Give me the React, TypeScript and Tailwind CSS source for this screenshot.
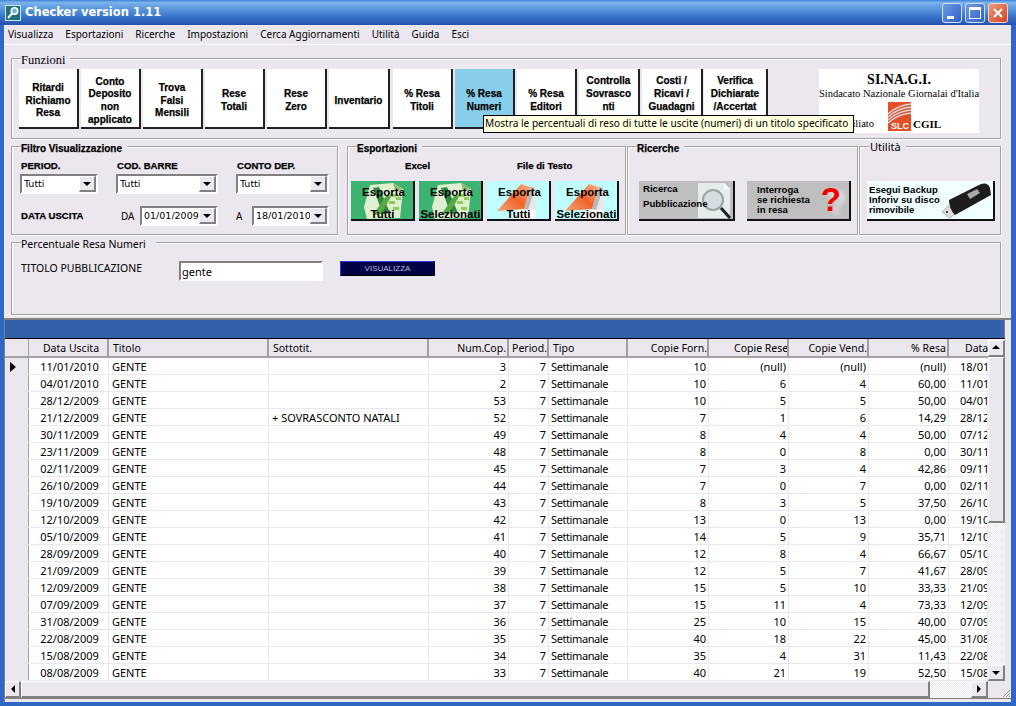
import type { ReactNode } from 'react';

const dejavu = "font-['DejaVu_Sans',sans-serif]";
const noto = "font-['Noto_Sans',sans-serif]";
const serif = "font-['Liberation_Serif',serif]";
const arial = "font-['Liberation_Sans',sans-serif]";

const menu = ['Visualizza', 'Esportazioni', 'Ricerche', 'Impostazioni', 'Cerca Aggiornamenti', 'Utilità', 'Guida', 'Esci'];

const functions = [
  { lines: ['Ritardi', 'Richiamo', 'Resa'], cls: 'w-[60px] bg-white' },
  { lines: ['Conto', 'Deposito', 'non', 'applicato'], cls: 'w-[60px] ml-[2px] bg-white' },
  { lines: ['Trova', 'Falsi', 'Mensili'], cls: 'w-[60px] ml-[2px] bg-white' },
  { lines: ['Rese', 'Totali'], cls: 'w-[60px] ml-[2px] bg-white' },
  { lines: ['Rese', 'Zero'], cls: 'w-[60px] ml-[2px] bg-white' },
  { lines: ['Inventario'], cls: 'w-[61px] ml-[2px] bg-white' },
  { lines: ['% Resa', 'Titoli'], cls: 'w-[60px] ml-[3px] bg-white' },
  { lines: ['% Resa', 'Numeri'], cls: 'w-[60px] ml-[2px] bg-[#87ceeb]' },
  { lines: ['% Resa', 'Editori'], cls: 'w-[60px] ml-[2px] bg-white' },
  // these three wrap to a fourth, empty line in the original
  { lines: ['Controlla', 'Sovrasco', 'nti'], cls: 'w-[61px] ml-[2px] bg-white pb-[13px]' },
  { lines: ['Costi /', 'Ricavi /', 'Guadagni'], cls: 'w-[61px] ml-[2px] bg-white pb-[13px]' },
  { lines: ['Verifica', 'Dichiarate', '/Accertat'], cls: 'w-[64px] ml-[1px] bg-white pb-[13px]' },
];

// date, sottotitolo, num, forn, rese, vend, %, data
const rows: string[][] = [
  ['11/01/2010', '', '3', '10', '(null)', '(null)', '(null)', '18/01'],
  ['04/01/2010', '', '2', '10', '6', '4', '60,00', '11/01'],
  ['28/12/2009', '', '53', '10', '5', '5', '50,00', '04/01'],
  ['21/12/2009', '+ SOVRASCONTO NATALI', '52', '7', '1', '6', '14,29', '28/12'],
  ['30/11/2009', '', '49', '8', '4', '4', '50,00', '07/12'],
  ['23/11/2009', '', '48', '8', '0', '8', '0,00', '30/11'],
  ['02/11/2009', '', '45', '7', '3', '4', '42,86', '09/11'],
  ['26/10/2009', '', '44', '7', '0', '7', '0,00', '02/11'],
  ['19/10/2009', '', '43', '8', '3', '5', '37,50', '26/10'],
  ['12/10/2009', '', '42', '13', '0', '13', '0,00', '19/10'],
  ['05/10/2009', '', '41', '14', '5', '9', '35,71', '12/10'],
  ['28/09/2009', '', '40', '12', '8', '4', '66,67', '05/10'],
  ['21/09/2009', '', '39', '12', '5', '7', '41,67', '28/09'],
  ['12/09/2009', '', '38', '15', '5', '10', '33,33', '21/09'],
  ['07/09/2009', '', '37', '15', '11', '4', '73,33', '12/09'],
  ['31/08/2009', '', '36', '25', '10', '15', '40,00', '07/09'],
  ['22/08/2009', '', '35', '40', '18', '22', '45,00', '31/08'],
  ['15/08/2009', '', '34', '35', '4', '31', '11,43', '22/08'],
  ['08/08/2009', '', '33', '40', '21', '19', '52,50', '15/08'],
];

const gridCols = 'grid grid-cols-[24px_80px_160px_160px_80px_40px_79px_81px_80px_80px_80px_39px]';
const raised = 'bg-[#ece7ef] border-t border-l border-t-white border-l-white border-r-2 border-b-2 border-r-[#808080] border-b-[#808080]';
const checker = 'bg-[repeating-conic-gradient(#ffffff_0_25%,#ece7ef_0_50%)] bg-[length:2px_2px]';
const heavy = '[-webkit-text-stroke:0.25px_#000]';
const labelCls = `text-[9.6px] leading-[12px] font-bold ${heavy} ${arial}`;
const legendBold = `top-[-5px] text-[10px] leading-[14px] font-bold ${heavy} ${arial}`;
const headSep = 'border-r-2 border-[#a0a0a0]';

function Group({ title, titleCls, cls, children }: { title: string; titleCls: string; cls: string; children?: ReactNode }) {
  return (
    <div className={`relative border border-[#a3a3a3] shadow-[inset_1px_1px_0_#fff,1px_1px_0_#fff] ${cls}`}>
      <span className={`absolute left-[9px] bg-[#ece7ef] pr-[5px] whitespace-nowrap ${titleCls}`}>{title}</span>
      {children}
    </div>
  );
}

function Arrow({ dir }: { dir: 'up' | 'down' | 'left' | 'right' }) {
  const pts = { up: '1,6 9,6 5,2', down: '1,3 9,3 5,7', left: '7,1 7,9 3,5', right: '3,1 3,9 7,5' }[dir];
  return (
    <svg viewBox="0 0 10 10" className="w-[10px] h-[10px]">
      <polygon points={pts} fill="#000" />
    </svg>
  );
}

function Combo({ value, cls }: { value: string; cls: string }) {
  return (
    <div className={`flex h-[20px] border-2 border-t-[#808080] border-l-[#808080] border-r-white border-b-white bg-white ${cls}`}>
      <span className={`flex-1 pl-[2px] text-[9.5px] leading-[16px] whitespace-nowrap overflow-hidden text-black ${dejavu}`}>{value}</span>
      <div className={`w-[17px] flex items-center justify-center ${raised}`}>
        <Arrow dir="down" />
      </div>
    </div>
  );
}

function ExcelIcon() {
  return (
    <svg viewBox="0 0 42 38" className="absolute left-[12px] top-[1px] w-[42px] h-[38px]">
      <polygon points="7,3 30,1 40,7 37,36 4,37 1,25" fill="#dff0d0" />
      <polygon points="30,1 40,7 32,9" fill="#8fbf6f" />
      <polygon points="10,6 16,5 27,31 20,32" fill="#2e8b3e" />
      <polygon points="23,14 29,13 18,32 10,33" fill="#58a848" />
      <rect x="27" y="12" width="6" height="3" fill="#8ccf50" />
      <rect x="33" y="15" width="5" height="3" fill="#8ccf50" />
      <rect x="26" y="19" width="6" height="3" fill="#8ccf50" />
      <rect x="30" y="25" width="6" height="3" fill="#8ccf50" />
    </svg>
  );
}

function NotesIcon({ id }: { id: string }) {
  return (
    <svg viewBox="0 0 42 38" className="absolute left-[10px] top-[1px] w-[42px] h-[38px]">
      <defs>
        <linearGradient id={id} x1="1" y1="0" x2="0" y2="1">
          <stop offset="0" stopColor="#f8b58c" />
          <stop offset="0.5" stopColor="#f0642a" />
          <stop offset="1" stopColor="#f5a578" />
        </linearGradient>
      </defs>
      <polygon points="30,3 39,6 39,37 16,37 22,27" fill="#e8e8e8" />
      <polygon points="22,27 39,28 39,37 16,37" fill="#fdfdfd" />
      <polygon points="24,2 34,5 27,27 0,29" fill={`url(#${id})`} />
      <polygon points="34,5 38,6 31,28 27,27" fill="#b9b9b9" />
    </svg>
  );
}

function FunctionButton({ lines, cls }: { lines: string[]; cls: string }) {
  return (
    <div className={`h-[60px] flex flex-col items-center justify-center pt-[6px] border-r-2 border-b-2 border-[#222] text-[10px] leading-[12.7px] font-bold text-black ${heavy} ${arial} ${cls}`}>
      {lines.map((l) => (
        <span key={l} className="whitespace-nowrap">{l}</span>
      ))}
    </div>
  );
}

function ExportButton({ bottom, cls, icon }: { bottom: string; cls: string; icon: ReactNode }) {
  return (
    <div className={`relative w-[64px] h-[40px] border-r-2 border-b-2 border-[#111] overflow-hidden ${cls}`}>
      {icon}
      <div className={`relative flex flex-col items-center pt-[5px] text-[11.5px] font-bold text-black leading-[13px] ${arial}`}>
        <span className="pl-[3px]">Esporta</span>
        <span className="mt-[9px] whitespace-nowrap pl-[1px]">{bottom}</span>
      </div>
    </div>
  );
}

export default function App() {
  return (
    <div className="relative w-[1016px] h-[706px] overflow-hidden flex flex-col bg-[#2f68c4]">
      {/* Title bar */}
      <div className="h-[25px] flex items-center pl-[5px] pr-[8px] bg-[linear-gradient(180deg,#3f80dc_0%,#7ab2ea_10%,#5b97de_35%,#3a76cc_65%,#2552ac_100%)]">
        <svg viewBox="0 0 16 16" className="w-[16px] h-[16px]">
          <rect x="0.5" y="0.5" width="15" height="15" fill="#1f6f7f" stroke="#cfe6ee" />
          <circle cx="9.5" cy="6" r="3.2" fill="#6fb5c8" stroke="#fff" strokeWidth="1.6" />
          <line x1="7" y1="8.5" x2="3" y2="13" stroke="#fff" strokeWidth="2" />
        </svg>
        <span className={`ml-[4px] pt-[1px] text-[11.5px] font-bold text-white ${dejavu}`}>Checker version 1.11</span>
        <div className="ml-auto flex gap-[3px]">
          <div className="w-[20px] h-[20px] rounded-[3px] border border-[#cfe0f5] bg-[linear-gradient(135deg,#6f9be6,#2f5fc8)] flex items-end pb-[3px] pl-[4px]">
            <div className="w-[7px] h-[3px] bg-white" />
          </div>
          <div className="w-[20px] h-[20px] rounded-[3px] border border-[#cfe0f5] bg-[linear-gradient(135deg,#6f9be6,#2f5fc8)] flex items-center justify-center">
            <div className="w-[12px] h-[12px] border border-white border-t-[3px]" />
          </div>
          <div className="w-[20px] h-[20px] rounded-[3px] border border-[#f0d8d0] bg-[linear-gradient(135deg,#ee9a80,#d0441f)] flex items-center justify-center">
            <svg viewBox="0 0 12 12" className="w-[12px] h-[12px]">
              <path d="M2 2 L10 10 M10 2 L2 10" stroke="#fff" strokeWidth="2" />
            </svg>
          </div>
        </div>
      </div>

      <div className="flex-1 min-h-0 px-[4px] pr-[5px] pb-[4px] flex">
        <div className="w-[1007px] bg-[#ece7ef] flex flex-col">
          {/* Menu */}
          <div className={`h-[20px] flex items-center pl-[4px] gap-[12px] border-b border-white text-[10px] text-black ${noto}`}>
            {menu.map((m) => (
              <span key={m}>{m}</span>
            ))}
          </div>

          <div className="pl-[7px] pr-[10px] flex flex-col">
            {/* Funzioni */}
            <Group title="Funzioni" titleCls={`top-[-6px] text-[12.5px] leading-[14px] ${serif}`} cls="mt-[13px] h-[81px] flex pl-[7px] pt-[10px] pr-[21px]">
              {functions.map((f) => (
                <FunctionButton key={f.lines.join()} lines={f.lines} cls={f.cls} />
              ))}
              <div className={`ml-auto w-[160px] h-[64px] bg-white flex flex-col items-center text-black ${serif}`}>
                <span className="text-[14px] leading-[15px] font-bold mt-[3px]">SI.NA.G.I.</span>
                <span className="text-[10.5px] leading-[14px] whitespace-nowrap">Sindacato Nazionale Giornalai d'Italia</span>
                <div className="flex items-end w-full pl-[19px] mt-[1px]">
                  <span className="text-[10.5px] leading-[12px] w-[50px] mb-[1px]">Affiliato</span>
                  <svg viewBox="0 0 23 29" className="w-[23px] h-[29px]">
                    <rect width="23" height="29" fill="#e2502a" />
                    <path d="M0 12 Q10 3 23 2 M0 15 Q10 6 23 5 M0 18 Q10 9 23 8 M0 21 Q10 12 23 11" stroke="#d9d9d9" strokeWidth="1.6" fill="none" />
                    <text x="12" y="27" textAnchor="middle" fontSize="9" fontWeight="bold" fontFamily="Liberation Sans" fill="#fff">SLC</text>
                  </svg>
                  <span className="text-[11px] leading-[12px] font-bold ml-[2px] mb-[1px]">CGIL</span>
                </div>
              </div>
            </Group>

            {/* Filter / export row */}
            <div className="flex mt-[7px]">
              <Group title="Filtro Visualizzazione" titleCls={legendBold} cls="w-[327px] h-[89px] pl-[8px] pt-[13px]">
                <div className="grid grid-cols-[96px_120px_93px]">
                  <span className={`pl-[1px] ${labelCls}`}>PERIOD.</span>
                  <span className={`pl-[1px] ${labelCls}`}>COD. BARRE</span>
                  <span className={`pl-[1px] ${labelCls}`}>CONTO DEP.</span>
                  <Combo value="Tutti" cls="w-[78px] mt-[2px]" />
                  <Combo value="Tutti" cls="w-[102px] mt-[2px]" />
                  <Combo value="Tutti" cls="w-[93px] mt-[2px]" />
                </div>
                <div className="flex items-center mt-[12px]">
                  <span className={`pl-[1px] w-[101px] ${labelCls}`}>DATA USCITA</span>
                  <span className={`w-[19px] text-[10px] ${noto}`}>DA</span>
                  <Combo value="01/01/2009" cls="w-[78px]" />
                  <span className={`ml-[18px] w-[16px] text-[10px] ${noto}`}>A</span>
                  <Combo value="18/01/2010" cls="w-[77px]" />
                </div>
              </Group>

              <Group title="Esportazioni" titleCls={legendBold} cls="ml-[9px] w-[279px] h-[89px] pl-[3px] pt-[13px]">
                <div className={`flex ${labelCls}`}>
                  <span className="ml-[54px] w-[112px]">Excel</span>
                  <span>File di Testo</span>
                </div>
                <div className="flex gap-[4px] mt-[9px]">
                  <ExportButton bottom="Tutti" cls="bg-[#3cb371]" icon={<ExcelIcon />} />
                  <ExportButton bottom="Selezionati" cls="bg-[#3cb371]" icon={<ExcelIcon />} />
                  <ExportButton bottom="Tutti" cls="bg-[#bfffff]" icon={<NotesIcon id="n1" />} />
                  <ExportButton bottom="Selezionati" cls="bg-[#bfffff]" icon={<NotesIcon id="n2" />} />
                </div>
              </Group>

              <Group title="Ricerche" titleCls={legendBold} cls="ml-[1px] w-[231px] h-[89px] flex pl-[11px] pt-[34px]">
                <div className={`relative w-[96px] h-[40px] bg-[#bebebe] border-r-2 border-b-2 border-[#111] overflow-hidden text-[9.6px] font-bold text-black ${arial}`}>
                  <svg viewBox="0 0 36 38" className="absolute right-0 top-[1px] w-[36px] h-[38px]">
                    <polygon points="1,1 27,1 33,7 33,36 1,36" fill="#e6ecec" />
                    <polygon points="27,1 33,7 27,7" fill="#fff" />
                    <circle cx="16" cy="18" r="10" fill="#d4dedf" stroke="#9aa4a6" strokeWidth="2" />
                    <line x1="24" y1="26" x2="33" y2="36" stroke="#222" strokeWidth="3" />
                  </svg>
                  <div className="relative pl-[4px] leading-[15px]">
                    <div>Ricerca</div>
                    <div>Pubblicazione</div>
                  </div>
                </div>
                <div className={`relative ml-[12px] w-[104px] h-[40px] bg-[#bebebe] border-r-2 border-b-2 border-[#111] overflow-hidden text-[9.6px] font-bold text-black ${arial}`}>
                  <span className="absolute right-[8px] top-[1px] text-[33px] leading-[36px] font-bold text-[#f00000] [text-shadow:6px_3px_5px_#e8e8e8]">?</span>
                  <div className="relative pl-[10px] pt-[4px] leading-[10px]">
                    <div>Interroga</div>
                    <div>se richiesta</div>
                    <div>in resa</div>
                  </div>
                </div>
              </Group>

              <Group title="Utilità" titleCls={`top-[-7px] text-[11px] leading-[14px] pl-[1px] ${noto}`} cls="ml-[1px] w-[142px] h-[89px] pl-[7px] pt-[34px]">
                <div className={`relative w-[128px] h-[40px] bg-[#f0ffff] border-r-2 border-b-2 border-[#111] overflow-hidden text-[9.6px] font-bold text-black ${arial}`}>
                  <svg viewBox="0 0 54 38" className="absolute right-0 top-0 w-[54px] h-[38px]">
                    <polygon points="3,31 9,25 18,31 11,37" fill="#dcdcdc" stroke="#8a8a8a" strokeWidth="0.6" />
                    <rect x="7" y="30" width="2" height="2" fill="#444" />
                    <path d="M10 19 L42 3 Q49 1 51 7 L52 14 L16 34 Q10 28 10 19 Z" fill="#1d1d1d" />
                    <path d="M28 13 L38 8 L41 12 L31 18 Z" fill="#a8a8a8" />
                  </svg>
                  <div className="relative pl-[2px] pt-[4px] leading-[10px]">
                    <div>Esegui Backup</div>
                    <div>Inforiv su disco</div>
                    <div>rimovibile</div>
                  </div>
                </div>
              </Group>
            </div>

            {/* Percentuale */}
            <Group title="Percentuale Resa Numeri" titleCls={`top-[-6px] text-[10.5px] leading-[14px] pr-[10px] ${noto}`} cls="mt-[7px] h-[73px] flex items-start pl-[9px] pt-[18px]">
              <span className={`w-[158px] text-[10.5px] leading-[14px] whitespace-nowrap ${noto}`}>TITOLO PUBBLICAZIONE</span>
              <div className={`w-[144px] h-[20px] border-2 border-t-[#808080] border-l-[#808080] border-r-white border-b-white bg-white pl-[1px] text-[11px] leading-[18px] ${noto}`}>gente</div>
              <div className={`ml-[17px] w-[95px] h-[15px] bg-[#000044] border border-l-[#2a3ce0] border-t-[#2a3ce0] border-r-black border-b-black text-center text-[#b8bcd8] text-[8px] leading-[14px] ${arial}`}>VISUALIZZA</div>
            </Group>
          </div>

          {/* Data grid */}
          <div className={`mt-[3px] flex-1 min-h-0 flex flex-col border-t-2 border-l border-[#808080] text-[11px] text-black ${noto}`}>
            <div className="h-[18px] bg-[#3360a8] border-r border-[#808080] w-[1000px]" />
            <div className="h-[1px] w-[1000px] bg-black" />
            <div className="flex h-[342px] w-[1000px]">
              <div className="w-[983px] overflow-hidden bg-white">
                <div className={`${gridCols} h-[19px] bg-[#ece7ef] border-b-2 border-[#a3a3a3] text-[10.5px] leading-[19px] whitespace-nowrap`}>
                  <div className="border-r border-[#a3a3a3]" />
                  <div className={`text-center pl-[6px] ${headSep}`}>Data Uscita</div>
                  <div className={`pl-[4px] ${headSep}`}>Titolo</div>
                  <div className={`pl-[4px] ${headSep}`}>Sottotit.</div>
                  <div className={`text-right pr-[1px] ${headSep}`}>Num.Cop.</div>
                  <div className={`text-right ${headSep}`}>Period.</div>
                  <div className={`pl-[4px] ${headSep}`}>Tipo</div>
                  <div className={`text-right ${headSep}`}>Copie Forn.</div>
                  <div className={`overflow-hidden pl-[25px] ${headSep}`}>Copie Rese</div>
                  <div className={`text-right ${headSep}`}>Copie Vend.</div>
                  <div className={`overflow-hidden pl-[42px] ${headSep}`}>% Resa</div>
                  <div className="pl-[16px] overflow-hidden">Data</div>
                </div>
                {rows.map((r, i) => (
                  <div key={r[0]} className={`${gridCols} h-[17px] leading-[18px] border-b border-[#ece7ef] whitespace-nowrap overflow-hidden [&>div]:border-r [&>div]:border-[#ece7ef]`}>
                    <div className="bg-[#ece7ef] !border-[#a3a3a3] flex items-center pl-[5px]">
                      {i === 0 && (
                        <svg viewBox="0 0 6 10" className="w-[6px] h-[10px]">
                          <polygon points="0,0 6,5 0,10" fill="#000" />
                        </svg>
                      )}
                    </div>
                    <div className="text-center pl-[2px]">{r[0]}</div>
                    <div className="pl-[3px]">GENTE</div>
                    <div className="pl-[3px]">{r[1]}</div>
                    <div className="text-right pr-[2px]">{r[2]}</div>
                    <div className="text-right pr-[2px]">7</div>
                    <div className="pl-[2px] tracking-[-0.4px]">Settimanale</div>
                    <div className="text-right pr-[2px]">{r[3]}</div>
                    <div className="text-right pr-[2px]">{r[4]}</div>
                    <div className="text-right pr-[2px]">{r[5]}</div>
                    <div className="text-right pr-[2px]">{r[6]}</div>
                    <div className="pl-[11px] overflow-hidden">{r[7]}</div>
                  </div>
                ))}
              </div>
              {/* Vertical scrollbar */}
              <div className={`w-[17px] flex flex-col pt-[1px] ${checker}`}>
                <div className={`h-[17px] flex items-center justify-center ${raised}`}>
                  <Arrow dir="up" />
                </div>
                <div className={`h-[166px] ${raised}`} />
                <div className="flex-1" />
                <div className={`h-[16px] flex items-center justify-center ${raised}`}>
                  <Arrow dir="down" />
                </div>
              </div>
            </div>
            {/* Horizontal scrollbar */}
            <div className="flex h-[18px] w-[1006px] border-b border-[#808080]">
              <div className={`w-[16px] flex items-center justify-center ${raised}`}>
                <Arrow dir="left" />
              </div>
              <div className={`w-[909px] ${raised}`} />
              <div className={`w-[41px] ${checker}`} />
              <div className={`w-[17px] flex items-center justify-center ${raised}`}>
                <Arrow dir="right" />
              </div>
              <div className="flex-1 flex items-end justify-end">
                <svg viewBox="0 0 10 10" className="w-[10px] h-[10px]">
                  <path d="M9 2 L2 9 M9 5 L5 9 M9 8 L8 9" stroke="#9a9a9a" strokeWidth="1" />
                </svg>
              </div>
            </div>
          </div>
        </div>
      </div>

      {/* Tooltip */}
      <div className={`absolute left-[483px] top-[115px] w-[371px] h-[18px] bg-[#ffffe1] border border-black pl-[1px] text-[10.1px] leading-[15px] text-black whitespace-nowrap overflow-hidden ${noto}`}>
        Mostra le percentuali di reso di tutte le uscite (numeri) di un titolo specificato
      </div>
    </div>
  );
}
